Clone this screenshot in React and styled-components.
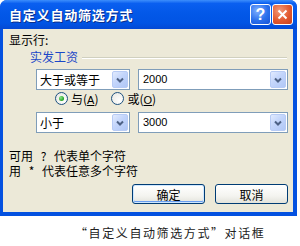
import styled, { createGlobalStyle } from 'styled-components'

const GlobalStyle = createGlobalStyle`
  body {
    margin: 0;
    background: #fff;
    font-family: "Noto Sans CJK SC", "DejaVu Sans", sans-serif;
    font-size: 12px;
    color: #000;
  }
`

const Page = styled.div`
  width: 300px;
  height: 246px;
  display: flex;
  flex-direction: column;
`

const Window = styled.div`
  width: 297px;
  height: 216px;
  box-sizing: border-box;
  display: flex;
  flex-direction: column;
  background: #0451e0;
  border-radius: 7px 7px 0 0;
  overflow: hidden;
`

const TitleBar = styled.div`
  height: 29px;
  flex: none;
  display: flex;
  align-items: center;
  padding: 0 4px 0 9px;
  background: linear-gradient(
    #3d8efc 0%,
    #0a5ff0 12%,
    #0358e8 45%,
    #0154e4 80%,
    #0449d4 100%
  );
`

const Title = styled.span`
  flex: 1;
  color: #fff;
  font-weight: bold;
  font-size: 13px;
  letter-spacing: 0.8px;
  text-shadow: 1px 1px 0 #0a2f8c;
`

const CapButton = styled.div`
  width: 21px;
  height: 21px;
  margin-left: 1px;
  box-sizing: border-box;
  border: 1px solid #fff;
  border-radius: 3px;
  display: flex;
  align-items: center;
  justify-content: center;
  color: #fff;
  font-family: "Liberation Sans", Arial, sans-serif;
  font-weight: bold;
  font-size: 16px;
  background: ${({ $red }) =>
    $red
      ? 'radial-gradient(circle at 35% 30%, #f39a7a 0%, #e2592f 55%, #c8401d 100%)'
      : 'radial-gradient(circle at 35% 30%, #7fb0ff 0%, #2b70ec 55%, #1552d6 100%)'};
`

const Body = styled.div`
  flex: 1;
  margin: 0 4px 4px 3px;
  background: #ece9d8;
  padding: 4px 5px 0 6px;
  display: flex;
  flex-direction: column;
`

const Line = styled.div`
  line-height: 14px;
  height: 14px;
  white-space: nowrap;
`

const GroupRow = styled.div`
  display: flex;
  align-items: center;
  height: 14px;
  margin: 3px 0 0 21px;
`

const GroupLabel = styled.span`
  color: #1a47c8;
  line-height: 14px;
  white-space: nowrap;
`

const Etched = styled.div`
  flex: 1;
  margin: 1px 1px 0 4px;
  border-top: 1px solid #d0d0bf;
  border-bottom: 1px solid #fff;
`

const CondRow = styled.div`
  display: flex;
  gap: 8px;
  margin: ${({ $top }) => $top}px 0 0 27px;
`

const Combo = styled.div`
  width: ${({ $w }) => $w}px;
  height: 21px;
  box-sizing: border-box;
  border: 1px solid #7f9db9;
  background: #fff;
  display: flex;
  align-items: stretch;
  padding: 1px;
`

const ComboText = styled.span`
  flex: 1;
  padding-left: ${({ $num }) => ($num ? 3 : 2)}px;
  line-height: 17px;
  font-family: ${({ $num }) =>
    $num ? '"Liberation Sans", Arial, sans-serif' : 'inherit'};
  font-size: ${({ $num }) => ($num ? 11 : 12)}px;
  white-space: nowrap;
`

const ArrowBtn = styled.div`
  width: 16px;
  box-sizing: border-box;
  border: 1px solid #b7cbf5;
  border-radius: 2px;
  background: linear-gradient(135deg, #e2ebfe 0%, #c3d5fb 45%, #b0c7f6 100%);
  display: flex;
  align-items: center;
  justify-content: center;
`

const RadioRow = styled.div`
  display: flex;
  align-items: center;
  height: 15px;
  margin: 1px 0 6px 46px;
`

const RadioItem = styled.label`
  display: flex;
  align-items: center;
  gap: 3px;
  margin-right: 13px;
  white-space: nowrap;
`

const RadioDot = styled.span`
  width: 13px;
  height: 13px;
  box-sizing: border-box;
  border-radius: 50%;
  border: 1px solid #1c5180;
  background: radial-gradient(circle at 70% 70%, #fff 0%, #e6e6e0 100%);
  display: flex;
  align-items: center;
  justify-content: center;

  &::after {
    content: '';
    display: ${({ $on }) => ($on ? 'block' : 'none')};
    width: 5px;
    height: 5px;
    border-radius: 50%;
    background: radial-gradient(circle at 35% 35%, #8ee68c, #21a121 70%);
  }
`

const U = styled.span`
  text-decoration: underline;
  font-family: "Liberation Sans", Arial, sans-serif;
  font-size: 11px;
`

const Hints = styled.div`
  margin-top: 15px;
  display: flex;
  flex-direction: column;
`

const HintLine = styled.div`
  height: 15px;
  line-height: 15px;
  white-space: nowrap;
  word-spacing: 5px;
`

const ButtonRow = styled.div`
  display: flex;
  justify-content: flex-end;
  gap: 10px;
  margin-top: 6px;
`

const Button = styled.div`
  width: 73px;
  height: 20px;
  box-sizing: border-box;
  border: 1px solid #003c74;
  border-radius: 3px;
  background: linear-gradient(#fff 0%, #f4f4f0 60%, #e3e3db 100%);
  display: flex;
  align-items: center;
  justify-content: center;
  box-shadow: ${({ $def }) =>
    $def ? 'inset 0 0 0 1px #cee7ff, inset 0 -1px 0 1px #6a9ef0' : 'none'};
`

const Caption = styled.div`
  margin: 10px 0 0 75px;
  font-size: 12px;
  letter-spacing: 1.6px;
  color: #222;
  white-space: nowrap;
  line-height: 14px;
`

function Chevron() {
  return (
    <svg width="8" height="6" viewBox="0 0 8 6">
      <polyline
        points="1,1.5 4,4.5 7,1.5"
        fill="none"
        stroke="#4d6185"
        strokeWidth="2"
      />
    </svg>
  )
}

function ComboBox({ w, value, num }) {
  return (
    <Combo $w={w}>
      <ComboText $num={num}>{value}</ComboText>
      <ArrowBtn>
        <Chevron />
      </ArrowBtn>
    </Combo>
  )
}

export default function App() {
  return (
    <Page>
      <GlobalStyle />
      <Window>
        <TitleBar>
          <Title>自定义自动筛选方式</Title>
          <CapButton>?</CapButton>
          <CapButton $red>
            <svg width="11" height="11" viewBox="0 0 11 11">
              <path d="M1.5 1.5 L9.5 9.5 M9.5 1.5 L1.5 9.5" stroke="#fff" strokeWidth="2" />
            </svg>
          </CapButton>
        </TitleBar>
        <Body>
          <Line>显示行:</Line>
          <GroupRow>
            <GroupLabel>实发工资</GroupLabel>
            <Etched />
          </GroupRow>
          <CondRow $top={5}>
            <ComboBox w={94} value="大于或等于" />
            <ComboBox w={150} value="2000" num />
          </CondRow>
          <RadioRow>
            <RadioItem>
              <RadioDot $on />
              <span>
                与(<U>A</U>)
              </span>
            </RadioItem>
            <RadioItem>
              <RadioDot />
              <span>
                或(<U>O</U>)
              </span>
            </RadioItem>
          </RadioRow>
          <CondRow $top={0}>
            <ComboBox w={94} value="小于" />
            <ComboBox w={150} value="3000" num />
          </CondRow>
          <Hints>
            <HintLine>可用 ? 代表单个字符</HintLine>
            <HintLine>用 * 代表任意多个字符</HintLine>
          </Hints>
          <ButtonRow>
            <Button $def>确定</Button>
            <Button>取消</Button>
          </ButtonRow>
        </Body>
      </Window>
      <Caption>“自定义自动筛选方式”对话框</Caption>
    </Page>
  )
}
